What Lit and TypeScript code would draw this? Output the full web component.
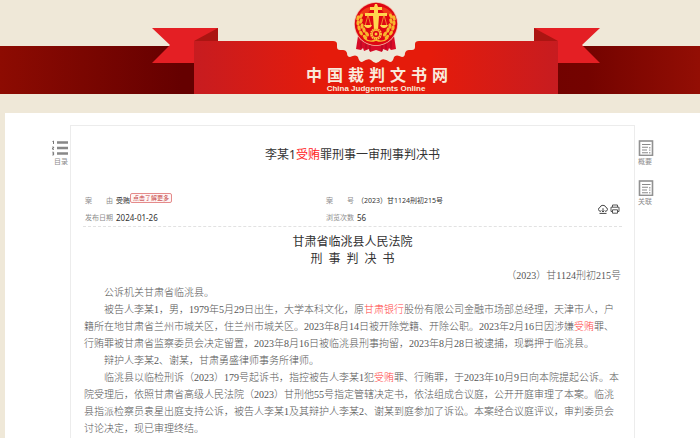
import { LitElement, html, svg, css } from "lit";
import { customElement } from "lit/decorators.js";

const SITE_NAME = [..."中国裁判文书网"];

// One grain of the wheat wreath: centre, tilt in degrees.
const GRAINS: [number, number, number][] = [
  [-18, -6, 15], [-18, -1, 0], [-17, 4, -15], [-15, 9, -30], [-11, 13, -48],
  [-15, -8, 35], [-15, -3, 20], [-14, 2, 5], [-12, 6, -15], [-9, 10, -35],
];

@customElement("court-banner")
export class CourtBanner extends LitElement {
  static styles = css`
    :host {
      display: flex;
      justify-content: center;
      padding-left: 52px;
      background:
        linear-gradient(90deg, #8d0b02 0%, #650000 26%, #650000 50%, #740300 84%, #930e04 100%)
        0 46px / 100% 48px no-repeat;
    }
    .ribbon { position: relative; flex: none; }
    .art { display: block; width: 448px; height: 94px; }
    .names {
      position: absolute;
      inset: 64px 0 0 0;
      display: flex;
      flex-direction: column;
      align-items: center;
      color: #f9eadb;
    }
    .cn {
      display: flex;
      gap: 5px;
      margin: 0;
      padding-left: 2px;
      font: 700 16px/20px "Noto Sans CJK SC", sans-serif;
    }
    .en { margin: 0; font: 700 8px/10px "Liberation Sans", sans-serif; }
  `;

  render() {
    const half = () => GRAINS.map(
      ([x, y, a]) => svg`<ellipse cx=${x} cy=${y} rx="1.6" ry="2.7" transform="rotate(${a} ${x} ${y})"/>`,
    );
    return html`
      <div class="ribbon">
        <svg class="art" viewBox="0 0 448 94" aria-hidden="true">
          <defs>
            <linearGradient id="cloth" x1="0" x2="1" y1="0" y2="0">
              <stop offset="0" stop-color="#c71c20" />
              <stop offset=".35" stop-color="#e51b0b" />
              <stop offset=".65" stop-color="#e51b0b" />
              <stop offset="1" stop-color="#c71c20" />
            </linearGradient>
          </defs>
          <path fill="#efe8d8" d="M180 40H268V66H180Z" />
          <path fill="#e41f24" d="M0 28H66V63H0L18 45Z M448 28H382V63H448L430 45Z" />
          <path fill="#ab1512" d="M42 41L66 28V42H42Z M406 41L382 28V42H406Z" />
          <path
            fill="url(#cloth)"
            d="M42 41H181Q185 41 185 44V47Q185 50 188 50H191Q194 50 195 53Q195 57 198 57Q204 54 206 57Q207 62 210 62Q216 58 219 60Q222 63 224 63Q226 63 229 60Q232 58 238 62Q241 62 242 57Q244 54 250 57Q253 57 253 53Q254 50 257 50H260Q263 50 263 47V44Q263 41 267 41H406V94H42Z"
          />
          <g transform="translate(224 24)">
            <path fill="#d80a28" d="M-18 12L-20 25L-15 26L-13 24L-12 27L-7 25L-6 28L0 26L6 28L7 25L12 27L13 24L15 26L20 25L18 12Z" />
            <path fill="none" stroke="#a80922" d="M-15 17V24M-10 20V25M-6 21V27M6 21V27M10 20V25M15 17V24" />
            <circle r="22" fill="#f2bfa8" />
            <circle r="21.2" fill="#df0713" />
            <path fill="#ef3a16" d="M-17 -10Q-10 -18 -4 -17L-9 -9ZM17 -10Q10 -18 4 -17L9 -9Z" />
            <g fill="#f8b62d">${half()}</g>
            <g fill="#f8b62d" transform="scale(-1 1)">${half()}</g>
            <path fill="#ffd64e" d="M-1 -20H1L2 -17H6V-14H2V-11H11V-8H3L2 6H-2L-3 -8H-11V-11H-2V-14H-6V-17H-2Z" />
            <path fill="none" stroke="#f9bd38" stroke-width=".7" d="M-8 -9L-11 2M-8 -9L-5 2M8 -9L5 2M8 -9L11 2" />
            <path fill="#ffd64e" d="M-12 1H-4Q-5 4 -8 4T-12 1ZM4 1H12Q11 4 8 4T4 1Z" />
            <circle cy="10" r="5" fill="#df0713" stroke="#ffc83c" stroke-width="1.8" stroke-dasharray="1.6 .5" />
            <circle cy="10" r="3.8" fill="none" stroke="#ffc83c" />
            <circle cy="10" r="1.5" fill="#ffc83c" />
            <path fill="none" stroke="#f8b62d" stroke-width="1.4" d="M-12 14Q-7 19 0 16Q7 19 12 14" />
          </g>
        </svg>
        <div class="names">
          <p class="cn">${SITE_NAME.map((c) => html`<span>${c}</span>`)}</p>
          <p class="en">China Judgements Online</p>
        </div>
      </div>
    `;
  }
}

@customElement("side-link")
export class SideLink extends LitElement {
  static properties = { kind: {}, label: {} };
  declare kind: string;
  declare label: string;

  static styles = css`
    :host { display: block; }
    .link {
      display: flex;
      flex-direction: column;
      width: 16px;
      color: #8c8c8c;
      text-decoration: none;
      font: 7px/10px "Noto Sans CJK SC", sans-serif;
      white-space: nowrap;
    }
    .list { align-items: flex-end; }
    .page { align-items: flex-start; }
    .icon { display: block; width: 16px; height: 16px; }
  `;

  render() {
    const list = svg`
      <path d="M5 2.5H16M5 8H16M5 13.5H16" fill="none" stroke="#888" stroke-width="2.6"/>
      <path d="M.5 1.5L1.5 1V4M.3 7H1.6V8H.6V9.3H2M.3 12.2H1.6V15H.3M.6 13.6H1.6" fill="none" stroke="#777" stroke-width="1"/>`;
    const page = svg`
      <rect x="1.5" y="1" width="13" height="14.4" fill="#fff" stroke="#919191" stroke-width="1.6"/>
      <path d="M4 4.5H12.5M4 7.3H10M4 10H9M4 12.7H10M11.8 7V8.4M11.8 9.6V10.8M11.8 12V13.4" fill="none" stroke="#8a8a8a" stroke-width="1.1"/>`;
    const isList = this.kind === "list";
    return html`
      <a class="link ${isList ? "list" : "page"}" href="#">
        <svg class="icon" viewBox="0 0 16 16" aria-hidden="true">${isList ? list : page}</svg>
        <span>${this.label}</span>
      </a>
    `;
  }
}

@customElement("app-root")
export class AppRoot extends LitElement {
  static styles = css`
    :host {
      display: flex;
      flex-direction: column;
      min-height: 100vh;
      box-sizing: border-box;
      background: #efe8d8;
      font-family: "Noto Sans", "Noto Sans CJK SC", sans-serif;
      text-spacing-trim: space-all;
      color: #333;
    }
    .page {
      flex: 1;
      display: flex;
      margin: 19px 0 0 5px;
      padding-top: 12px;
      background: #fff;
    }
    .side {
      flex: none;
      box-sizing: border-box;
      width: 65px;
      display: flex;
      flex-direction: column;
      gap: 14px;
      padding-top: 15px;
    }
    .left { align-items: flex-end; padding-right: 2px; }
    .right { padding-left: 3px; }
    .card {
      flex: 1;
      min-width: 0;
      border: solid #ececec;
      border-width: 1px 1px 0;
      padding: 19px 12px 0;
    }
    .title {
      margin: 0;
      text-align: center;
      font: 400 12px/20px "Noto Sans", "Noto Sans CJK SC", sans-serif;
    }
    .hit { color: #f22; }
    .info {
      display: flex;
      align-items: center;
      margin-top: 27px;
      padding: 0 2px;
      border-bottom: 1px dashed #e2e2e2;
      font-size: 7px;
      line-height: 17px;
    }
    .facts {
      flex: 1;
      display: grid;
      grid-template-columns: 241px 1fr;
      margin: 0;
    }
    .fact { display: flex; gap: 3px; height: 17px; }
    .fact dt { display: flex; justify-content: space-between; width: 28px; color: #8c8c8c; }
    .fact dd { margin: 0; position: relative; }
    .fact .figure { font-size: 8px; }
    .more {
      position: absolute;
      left: 100%;
      top: 1px;
      padding: 0 2px;
      border: 1px solid #e58b8b;
      border-radius: 2px;
      background: #fff5f5;
      color: #c64444;
      font: 6px/8px "Noto Sans CJK SC", sans-serif;
      white-space: nowrap;
    }
    .tools { display: flex; gap: 2px; }
    .tool { display: block; padding: 0; border: 0; background: none; }
    .glyph { display: block; width: 10px; height: 10px; }
    .doc {
      padding: 0 1px;
      color: #555;
      font: 300 10px/17px "Liberation Serif", "Noto Sans CJK SC", serif;
      white-space: nowrap;
    }
    .court {
      margin: 7px 0 0;
      text-align: center;
      color: #333;
      font-size: 12px;
      font-weight: 400;
      line-height: 17px;
    }
    .number { margin: 0; text-align: right; line-height: 16px; }
    .para { margin: 0; text-indent: 20px; }
    .doc .hit { color: #ff3f3f; }
  `;

  render() {
    const hit = (t: string) => html`<span class="hit">${t}</span>`;
    return html`
      <court-banner></court-banner>
      <div class="page" lang="zh-CN">
        <nav class="side left"><side-link kind="list" label="目录"></side-link></nav>
        <main class="card">
          <h1 class="title">李某1${hit("受贿")}罪刑事一审刑事判决书</h1>
          <div class="info">
            <dl class="facts">
              <div class="fact">
                <dt><span>案</span><span>由</span></dt>
                <dd>受贿<button class="more">点击了解更多</button></dd>
              </div>
              <div class="fact">
                <dt><span>案</span><span>号</span></dt>
                <dd>（2023）甘1124刑初215号</dd>
              </div>
              <div class="fact"><dt>发布日期</dt><dd class="figure">2024-01-26</dd></div>
              <div class="fact"><dt>浏览次数</dt><dd class="figure">56</dd></div>
            </dl>
            <div class="tools">
              <button class="tool" aria-label="下载">
                <svg class="glyph" viewBox="0 0 10 10" fill="none" stroke="#444">
                  <path d="M3 7.2H2A1.9 1.9 0 0 1 1.9 3.5A3.2 3.2 0 0 1 8 3.5A1.9 1.9 0 0 1 8 7.2H7M5 4.2V8M3.6 6.6L5 8L6.4 6.6M1.5 9.4H8.5" />
                </svg>
              </button>
              <button class="tool" aria-label="打印">
                <svg class="glyph" viewBox="0 0 10 10" fill="none" stroke="#555">
                  <path d="M2.5 3V1H7.5V3M2.5 7.5H1V3.2H9V7.5H7.5M2.5 5.8H7.5V9.2H2.5Z" />
                </svg>
              </button>
            </div>
          </div>
          <article class="doc">
            <h2 class="court">甘肃省临洮县人民法院<br />刑&nbsp; 事&nbsp; 判&nbsp; 决&nbsp; 书</h2>
            <p class="number">（2023）甘1124刑初215号</p>
            <p class="para">公诉机关甘肃省临洮县。</p>
            <p class="para">
              被告人李某1，男，1979年5月29日出生，大学本科文化，原${hit("甘肃银行")}股份有限公司金融市场部总经理，天津市人，户<br />籍所在地甘肃省兰州市城关区，住兰州市城关区。2023年8月14日被开除党籍、开除公职。2023年2月16日因涉嫌${hit("受贿")}罪、<br />行贿罪被甘肃省监察委员会决定留置，2023年8月16日被临洮县刑事拘留，2023年8月28日被逮捕，现羁押于临洮县。
            </p>
            <p class="para">辩护人李某2、谢某，甘肃勇盛律师事务所律师。</p>
            <p class="para">
              临洮县以临检刑诉（2023）179号起诉书，指控被告人李某1犯${hit("受贿")}罪、行贿罪，于2023年10月9日向本院提起公诉。本<br />院受理后，依照甘肃省高级人民法院（2023）甘刑他55号指定管辖决定书，依法组成合议庭，公开开庭审理了本案。临洮<br />县指派检察员袁星出庭支持公诉，被告人李某1及其辩护人李某2、谢某到庭参加了诉讼。本案经合议庭评议，审判委员会<br />讨论决定，现已审理终结。
            </p>
          </article>
        </main>
        <nav class="side right">
          <side-link kind="page" label="概要"></side-link>
          <side-link kind="page" label="关联"></side-link>
        </nav>
      </div>
    `;
  }
}
